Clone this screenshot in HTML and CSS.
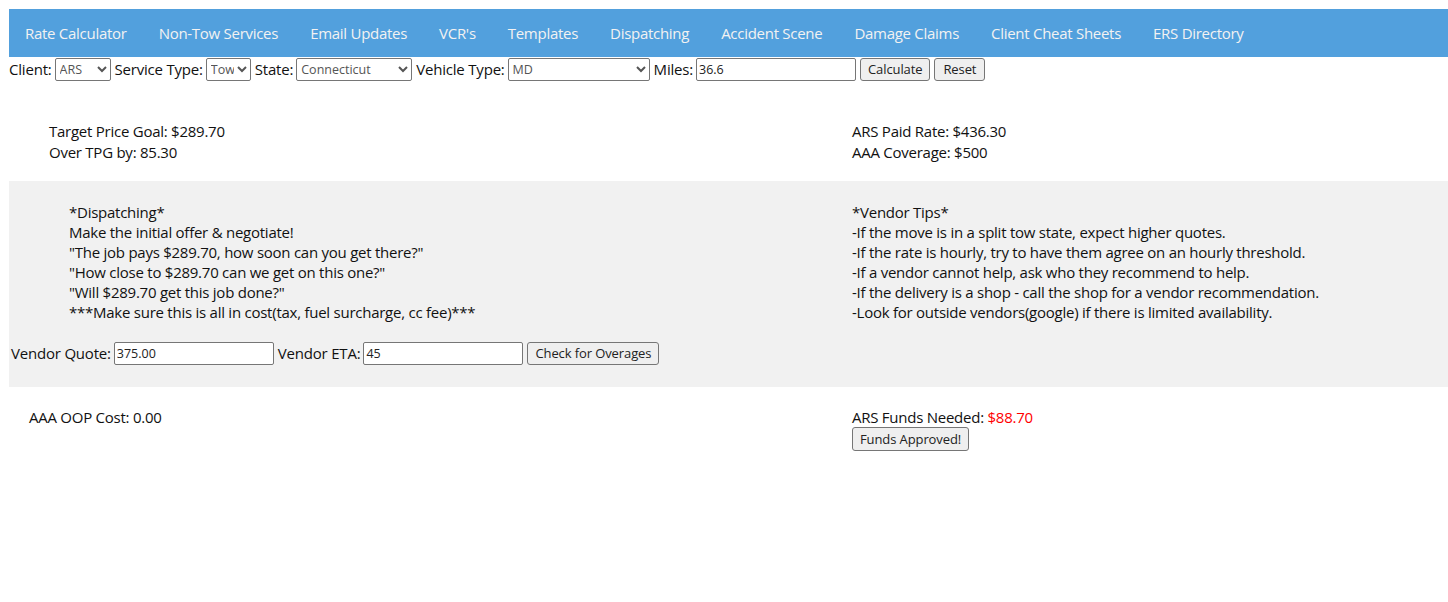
FILE: index.html
```html
<!DOCTYPE html>
<html lang="en">
<head>
<meta charset="utf-8">
<title>Rate Calculator</title>
<link rel="stylesheet" href="styles.css">
</head>
<body>
<nav class="topnav">
  <a href="#">Rate Calculator</a>
  <a href="#">Non-Tow Services</a>
  <a href="#">Email Updates</a>
  <a href="#">VCR's</a>
  <a href="#">Templates</a>
  <a href="#">Dispatching</a>
  <a href="#">Accident Scene</a>
  <a href="#">Damage Claims</a>
  <a href="#">Client Cheat Sheets</a>
  <a href="#">ERS Directory</a>
</nav>

<form class="controls">
  <label>Client:</label>
  <select class="sel sel-client"><option>ARS</option></select>
  <label>Service Type:</label>
  <select class="sel sel-service"><option>Tow</option></select>
  <label>State:</label>
  <select class="sel sel-state"><option>Connecticut</option></select>
  <label>Vehicle Type:</label>
  <select class="sel sel-vehicle"><option>MD</option></select>
  <label>Miles:</label>
  <input class="field" type="text" value="36.6">
  <button type="button" class="btn">Calculate</button>
  <button type="button" class="btn btn-wide">Reset</button>
</form>

<section class="summary">
  <div class="col-left">
    <div>Target Price Goal: $289.70</div>
    <div>Over TPG by: 85.30</div>
  </div>
  <div class="col-right">
    <div>ARS Paid Rate: $436.30</div>
    <div>AAA Coverage: $500</div>
  </div>
</section>

<section class="dispatch">
  <div class="dispatch-grid">
    <div class="notes">
      <div>*Dispatching*</div>
      <div>Make the initial offer &amp; negotiate!</div>
      <div>"The job pays $289.70, how soon can you get there?"</div>
      <div>"How close to $289.70 can we get on this one?"</div>
      <div>"Will $289.70 get this job done?"</div>
      <div>***Make sure this is all in cost(tax, fuel surcharge, cc fee)***</div>
    </div>
    <div class="tips">
      <div>*Vendor Tips*</div>
      <div>-If the move is in a split tow state, expect higher quotes.</div>
      <div>-If the rate is hourly, try to have them agree on an hourly threshold.</div>
      <div>-If a vendor cannot help, ask who they recommend to help.</div>
      <div>-If the delivery is a shop - call the shop for a vendor recommendation.</div>
      <div>-Look for outside vendors(google) if there is limited availability.</div>
    </div>
  </div>
  <div class="quote-row">
    <label>Vendor Quote:</label>
    <input class="field" type="text" value="375.00">
    <label>Vendor ETA:</label>
    <input class="field" type="text" value="45">
    <button type="button" class="btn">Check for Overages</button>
  </div>
</section>

<section class="funds">
  <div class="funds-left">AAA OOP Cost: 0.00</div>
  <div class="funds-right">
    <div>ARS Funds Needed: <span class="red">$88.70</span></div>
    <button type="button" class="btn">Funds Approved!</button>
  </div>
</section>
</body>
</html>
```
FILE: styles.css
```css
html, body {
  background: #ffffff;
}
body {
  margin: 9px 0 8px 9px;
  font-family: "Open Sans", "DejaVu Sans", sans-serif;
  font-size: 15px;
  letter-spacing: -0.25px;
  color: #111111;
}
.topnav {
  background: #52a0dd;
  display: flex;
  height: 48px;
  align-items: center;
}
.topnav a {
  color: #f2f2f2;
  text-decoration: none;
  font-size: 15px;
  letter-spacing: -0.28px;
  padding: 0 16px;
  line-height: 48px;
}
.controls {
  display: flex;
  align-items: center;
  height: 24px;
  margin: 0;
}
.controls label,
.quote-row label {
  letter-spacing: -0.2px;
  margin-right: 3px;
}
.controls .sel,
.controls .field,
.quote-row .field {
  margin-right: 4px;
}
.sel {
  font-family: "Open Sans", sans-serif;
  font-size: 12.5px;
  letter-spacing: 0;
  color: #555;
  height: 23px;
  border: 1px solid #767676;
  border-radius: 2px;
  background: #fff;
  padding: 0;
}
.sel-client { width: 56px; }
.sel-service { width: 45px; }
.sel-state { width: 116px; }
.sel-vehicle { width: 142px; }
.field {
  font-family: "Open Sans", sans-serif;
  font-size: 12.5px;
  letter-spacing: 0;
  color: #222;
  width: 160px;
  height: 23px;
  box-sizing: border-box;
  border: 1px solid #767676;
  border-radius: 2px;
  padding: 0 2px;
}
.btn {
  font-family: "Open Sans", sans-serif;
  font-size: 13px;
  letter-spacing: -0.1px;
  color: #222;
  background: #efefef;
  border: 1px solid #767676;
  border-radius: 3px;
  height: 23px;
  box-sizing: border-box;
  padding: 0 7px;
  margin-right: 4px;
}
.btn-wide {
  padding: 0 8px;
}
.summary {
  display: grid;
  grid-template-columns: 803px 1fr;
  padding: 40px 0 18px;
  line-height: 21px;
}
.summary .col-left { padding-left: 40px; }
.summary .col-right { padding-left: 40px; }
.dispatch {
  background: #f1f1f1;
  padding: 21px 0 22px;
}
.dispatch-grid {
  display: grid;
  grid-template-columns: 803px 1fr;
  line-height: 20px;
}
.notes { padding-left: 60px; }
.tips { padding-left: 40px; }
.quote-row {
  display: flex;
  align-items: center;
  margin-top: 19px;
  padding-left: 2px;
  height: 24px;
}
.funds {
  display: grid;
  grid-template-columns: 803px 1fr;
  padding-top: 20px;
  line-height: 20px;
}
.funds-left { padding-left: 20px; }
.funds-right { padding-left: 40px; }
.funds-right .btn {
  display: block;
  height: 24px;
}
.red { color: #ff0000; }
```
